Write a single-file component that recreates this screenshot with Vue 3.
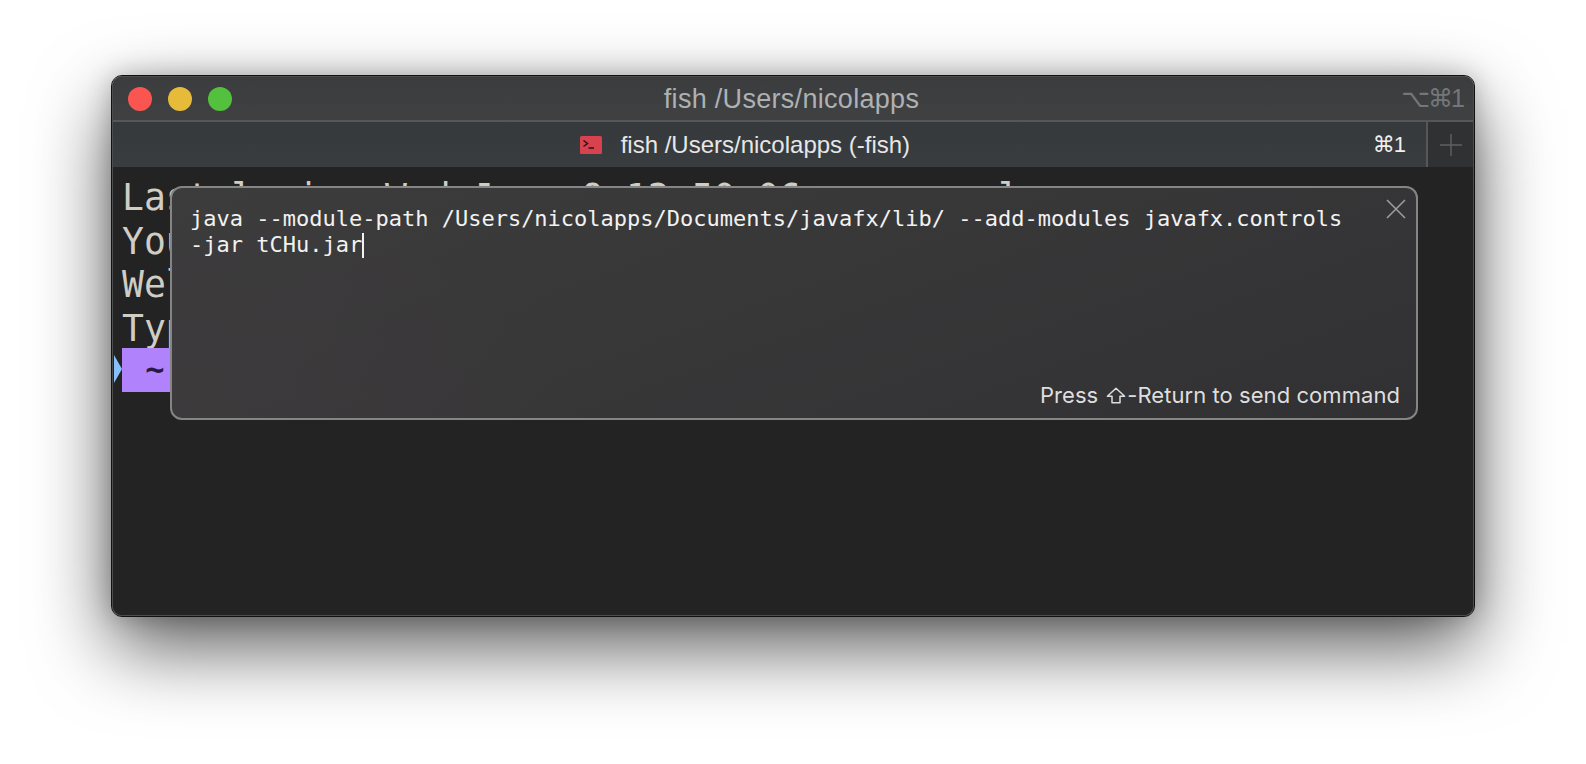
<script setup>
const lines = [
  'Last login: Wed Jun  9 12:50:06 on console',
  'You have new mail.',
  'Welcome to fish, the friendly interactive shell',
  'Type `help` for instructions on how to use fish',
]
</script>

<template>
  <div class="page">
    <div class="window">
      <header class="titlebar">
        <div class="lights">
          <span class="light red"></span>
          <span class="light yellow"></span>
          <span class="light green"></span>
        </div>
        <div class="title">fish /Users/nicolapps</div>
        <div class="shortcut">⌥⌘1</div>
      </header>
      <nav class="tabbar">
        <div class="tab">
          <div class="tab-label">
            <svg class="tab-icon" width="22" height="18" viewBox="0 0 22 18">
              <rect width="22" height="18" rx="1.5" fill="#d8424f" />
              <path d="M3.5 4.5 L7.5 7.5 L3.5 10.5" fill="none" stroke="#2a1216" stroke-width="1.5" />
              <path d="M8.5 12 H14" stroke="#2a1216" stroke-width="1.3" />
            </svg>
            <span>fish /Users/nicolapps (-fish)</span>
          </div>
          <span class="tab-key">⌘1</span>
        </div>
        <div class="plus">
          <svg width="22" height="22" viewBox="0 0 22 22">
            <path d="M11 0 V22 M0 11 H22" stroke="#5f6264" stroke-width="1.4" />
          </svg>
        </div>
      </nav>
      <main class="terminal">
        <div v-for="line in lines" :key="line" class="line">{{ line }}</div>
        <div class="prompt">
          <span class="arrow"></span>
          <span class="segment"> ~ </span>
        </div>
        <section class="composer">
          <div class="command">java --module-path /Users/nicolapps/Documents/javafx/lib/ --add-modules javafx.controls<br />-jar tCHu.jar<span class="caret"></span></div>
          <svg class="close" width="20" height="20" viewBox="0 0 20 20">
            <path d="M1 1 L19 19 M19 1 L1 19" stroke="#9c9c9c" stroke-width="1.6" />
          </svg>
          <div class="hint">
            <span>Press</span>
            <svg class="shift" width="20" height="17" viewBox="0 0 20 17">
              <path d="M10 1.2 L18.6 9.2 H14 V15.8 H6 V9.2 H1.4 Z" fill="none" stroke="#dedede" stroke-width="1.5" stroke-linejoin="round" />
            </svg>
            <span>-Return to send command</span>
          </div>
        </section>
      </main>
    </div>
  </div>
</template>

<style>
html, body { margin: 0; background: #fff; overflow: hidden; }
</style>

<style scoped>
.page {
  width: 1586px;
  height: 764px;
  box-sizing: border-box;
  padding-top: 76px;
  display: flex;
  justify-content: center;
  align-items: flex-start;
  background: #fff;
}
.window {
  width: 1362px;
  height: 540px;
  box-sizing: border-box;
  display: flex;
  flex-direction: column;
  border-radius: 10px;
  overflow: hidden;
  background: #232323;
  border: 1px solid #4b4d4f;
  outline: 1px solid #111;
  box-shadow: 0 30px 78px rgba(0, 0, 0, 0.66), 0 0 26px rgba(0, 0, 0, 0.24);
  font-family: "Liberation Sans", sans-serif;
}
.titlebar {
  height: 43px;
  flex: none;
  display: flex;
  align-items: center;
  position: relative;
  background: linear-gradient(#3a3c3e, #3f4143);
  border-bottom: 2px solid #55585a;
  box-sizing: content-box;
}
.lights { display: flex; gap: 16px; padding-left: 15px; }
.light { width: 24px; height: 24px; border-radius: 50%; }
.red { background: #fb5551; }
.yellow { background: #e6bb3a; }
.green { background: #53c13e; }
.title {
  position: absolute;
  left: 0;
  right: 3px;
  padding-top: 2px;
  text-align: center;
  font-size: 27px;
  letter-spacing: 0.3px;
  color: #aeb1b3;
}
.shortcut {
  margin-left: auto;
  padding-right: 10px;
  font-family: "Liberation Sans", "DejaVu Sans", sans-serif;
  font-size: 25px;
  letter-spacing: -2px;
  color: #74777a;
}
.tabbar {
  height: 45px;
  flex: none;
  display: flex;
  background: #2f3133;
}
.tab {
  flex: 1;
  display: flex;
  align-items: center;
  background: linear-gradient(#36393b, #3a3d3f);
  border-right: 2px solid #55585a;
  position: relative;
}
.tab-label {
  flex: 1;
  display: flex;
  justify-content: center;
  align-items: center;
  gap: 19px;
  font-size: 24px;
  color: #e6e7e8;
  padding-left: 4px;
}
.tab-icon { flex: none; }
.tab-key {
  font-family: "Liberation Sans", "DejaVu Sans", sans-serif;
  font-size: 22px;
  letter-spacing: -1px;
  color: #f0f0f0;
  padding-right: 21px;
}
.plus {
  width: 45px;
  flex: none;
  display: flex;
  align-items: center;
  justify-content: center;
}
.terminal {
  flex: 1;
  position: relative;
  padding: 6px 0 0 9px;
  background: #232323;
  font-family: "DejaVu Sans Mono", monospace;
  font-size: 36.4px;
  color: #d0cec4;
  white-space: pre;
}
.line { height: 43.7px; line-height: 49.7px; }
.prompt { display: flex; position: relative; line-height: 43.7px; }
.segment {
  display: block;
  height: 44px;
  width: 66px;
  box-sizing: border-box;
  padding-left: 4px;
  background: #b083fd;
  color: #2a1845;
  font-size: 32px;
  font-weight: 700;
}
.arrow {
  position: absolute;
  left: -8px;
  top: 7px;
  width: 0;
  height: 0;
  border-top: 14px solid transparent;
  border-bottom: 14px solid transparent;
  border-left: 8px solid #86c1fb;
}
.composer {
  position: absolute;
  left: 57px;
  top: 19px;
  width: 1248px;
  height: 234px;
  box-sizing: border-box;
  display: flex;
  flex-direction: column;
  border: 2px solid #858585;
  border-radius: 12px;
  background: radial-gradient(circle at 0% 100%, rgba(64, 59, 63, 0.5) 0%, rgba(64, 59, 63, 0) 30%),
    linear-gradient(160deg, #3c3c3c 0%, #383738 50%, #313033 100%);
  padding: 18px 16px 8px 18px;
}
.command {
  font-family: "DejaVu Sans Mono", monospace;
  font-size: 22px;
  line-height: 26px;
  color: #f2f2f2;
  white-space: pre;
}
.caret {
  display: inline-block;
  width: 2px;
  height: 25px;
  background: #f2f2f2;
  vertical-align: -6px;
}
.close { position: absolute; top: 11px; right: 10px; }
.hint {
  margin-top: auto;
  display: flex;
  justify-content: flex-end;
  align-items: center;
  font-family: "Inter", sans-serif;
  font-size: 22px;
  letter-spacing: 0.06px;
  line-height: 30px;
  color: #dedede;
}
.shift { margin: 0 1px 0 8px; flex: none; }
</style>
